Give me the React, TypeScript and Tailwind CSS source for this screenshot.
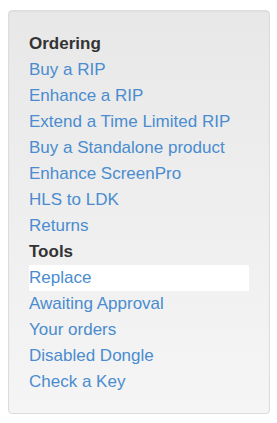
const sections = [
  {
    title: "Ordering",
    links: [
      "Buy a RIP",
      "Enhance a RIP",
      "Extend a Time Limited RIP",
      "Buy a Standalone product",
      "Enhance ScreenPro",
      "HLS to LDK",
      "Returns",
    ],
  },
  {
    title: "Tools",
    links: ["Replace", "Awaiting Approval", "Your orders", "Disabled Dongle", "Check a Key"],
  },
]

export default function App() {
  return (
    <div className="bg-white pt-[10px] pl-2 w-[277px] h-[423px] font-['Liberation_Sans',Arial,sans-serif]">
      <div className="w-[262px] h-[404px] rounded border border-[#dcdcdc] bg-gradient-to-b from-[#e8e8e8] to-[#f5f5f5] px-5 pt-5 shadow-[inset_0_1px_2px_rgba(0,0,0,0.04)]">
        <ul className="text-[17px] leading-[26px]">
          {sections.map((s) => (
            <li key={s.title}>
              <div className="font-bold text-[#333]">{s.title}</div>
              <ul>
                {s.links.map((l) => (
                  <li key={l} className={l === "Replace" ? "bg-white" : ""}>
                    <a href="#" className="text-[#4a8ccf]">{l}</a>
                  </li>
                ))}
              </ul>
            </li>
          ))}
        </ul>
      </div>
    </div>
  )
}
